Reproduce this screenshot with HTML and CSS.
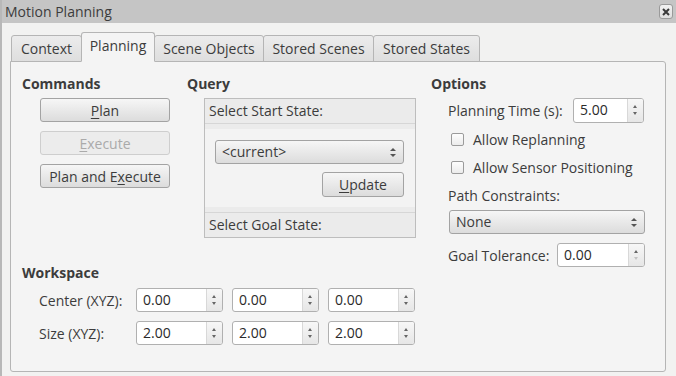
FILE: index.html
```html
<!DOCTYPE html>
<html lang="en">
<head>
    <meta charset="UTF-8">
    <meta name="viewport" content="width=device-width, initial-scale=1.0">
    <title>Motion Planning</title>
    <link rel="stylesheet" href="styles.css">
</head>
<body>
    <div class="window">
        <div class="titlebar">
            <span class="title">Motion Planning</span>
            <span class="close-btn">
                <svg width="8" height="8" viewBox="0 0 8 8"><path d="M1 1 L7 7 M7 1 L1 7" stroke="#3a3a3a" stroke-width="2"/></svg>
            </span>
        </div>

        <div class="content">
            <div class="tabs">
                <div class="tab tab-context">Context</div>
                <div class="tab tab-planning active">Planning</div>
                <div class="tab tab-objects">Scene Objects</div>
                <div class="tab tab-scenes">Stored Scenes</div>
                <div class="tab tab-states">Stored States</div>
            </div>

            <div class="pane">
                <!-- Commands -->
                <div class="commands">
                    <h2 class="group-title">Commands</h2>
                    <button class="btn cmd-btn"><u>P</u>lan</button>
                    <button class="btn cmd-btn" disabled><u>E</u>xecute</button>
                    <button class="btn cmd-btn">Plan and E<u>x</u>ecute</button>
                </div>

                <!-- Query -->
                <div class="query">
                    <h2 class="group-title">Query</h2>
                    <div class="toolbox">
                        <div class="toolbox-head">Select Start State:</div>
                        <div class="toolbox-page">
                            <div class="combo">&lt;current&gt;</div>
                            <div class="update-row">
                                <button class="btn update-btn"><u>U</u>pdate</button>
                            </div>
                        </div>
                        <div class="toolbox-head last">Select Goal State:</div>
                    </div>
                </div>

                <!-- Options -->
                <div class="options">
                    <h2 class="group-title">Options</h2>
                    <div class="opt-row time-row">
                        <span class="label">Planning Time (s):</span>
                        <div class="spin spin-time"><span class="spin-text">5.00</span><span class="spin-arrows"></span></div>
                    </div>
                    <label class="check-row first"><span class="checkbox"></span>Allow Replanning</label>
                    <label class="check-row"><span class="checkbox"></span>Allow Sensor Positioning</label>
                    <div class="opt-row label-row"><span class="label">Path Constraints:</span></div>
                    <div class="combo combo-wide">None</div>
                    <div class="opt-row goal-row">
                        <span class="label">Goal Tolerance:</span>
                        <div class="spin spin-goal"><span class="spin-text">0.00</span><span class="spin-arrows at-min"></span></div>
                    </div>
                </div>

                <!-- Workspace -->
                <div class="workspace">
                    <h2 class="group-title">Workspace</h2>
                    <div class="ws-row first">
                        <span class="ws-label">Center (XYZ):</span>
                        <div class="spin"><span class="spin-text">0.00</span><span class="spin-arrows"></span></div>
                        <div class="spin"><span class="spin-text">0.00</span><span class="spin-arrows"></span></div>
                        <div class="spin"><span class="spin-text">0.00</span><span class="spin-arrows"></span></div>
                    </div>
                    <div class="ws-row">
                        <span class="ws-label">Size (XYZ):</span>
                        <div class="spin"><span class="spin-text">2.00</span><span class="spin-arrows"></span></div>
                        <div class="spin"><span class="spin-text">2.00</span><span class="spin-arrows"></span></div>
                        <div class="spin"><span class="spin-text">2.00</span><span class="spin-arrows"></span></div>
                    </div>
                </div>
            </div>
        </div>
    </div>
</body>
</html>
```

FILE: styles.css
```css
body {
    margin: 0;
    padding: 0;
    font-family: 'Open Sans', 'DejaVu Sans', sans-serif;
    font-size: 14px;
    color: #3c3c3c;
    background: #f2f2f1;
}

.window {
    width: 676px;
    height: 376px;
    box-sizing: border-box;
    border-left: 2px solid #b8b8b8;
    overflow: hidden;
}

/* Title bar */
.titlebar {
    height: 23px;
    background: #c5c5c5;
    display: flex;
    align-items: center;
    justify-content: space-between;
    padding: 0 3px 0 3px;
}

.title {
    font-size: 14px;
}

.close-btn {
    width: 12px;
    height: 13px;
    border: 1px solid #9a9a9a;
    border-radius: 3px;
    background: linear-gradient(#f2f2f2, #dedede);
    display: flex;
    align-items: center;
    justify-content: center;
}

/* Tabs */
.content {
    padding: 9px 0 0 8px;
}

.tabs {
    display: flex;
    align-items: flex-end;
    padding-left: 1px;
    margin-bottom: -1px;
    position: relative;
    z-index: 1;
}

.tab {
    height: 27px;
    box-sizing: border-box;
    border: 1px solid #b5b5b5;
    border-radius: 3px 3px 0 0;
    background: linear-gradient(#ececec, #dedede);
    display: flex;
    align-items: center;
    justify-content: center;
    margin-right: -1px;
}

.tab.active {
    height: 30px;
    background: #f4f4f4;
    border-bottom-color: #f4f4f4;
    padding-bottom: 3px;
    position: relative;
}

.tab-context { width: 71px; }
.tab-planning { width: 74px; }
.tab-objects { width: 110px; }
.tab-scenes { width: 111px; }
.tab-states { width: 107px; }

.pane {
    width: 656px;
    height: 311px;
    box-sizing: border-box;
    border: 1px solid #b5b5b5;
    border-radius: 0 3px 3px 3px;
    background: #f4f4f4;
    display: grid;
    grid-template-columns: 165px 244px 1fr;
    grid-template-rows: auto 1fr;
    padding: 13px 0 0 11px;
}

.group-title {
    font-size: 14px;
    font-weight: bold;
    margin: 0;
    height: 18px;
    line-height: 18px;
}

/* Buttons */
.btn {
    font-family: inherit;
    font-size: 14px;
    color: #3c3c3c;
    border: 1px solid #a3a3a3;
    border-radius: 3px;
    background: linear-gradient(#f6f6f6, #dcdcdc);
    padding: 0;
    box-sizing: border-box;
}

.btn u {
    text-underline-offset: 2px;
}

.btn:disabled {
    color: #aaaaaa;
    border-color: #cecece;
    background: #ececec;
}

.commands {
    grid-column: 1;
    grid-row: 1;
    display: flex;
    flex-direction: column;
    align-items: flex-start;
    gap: 9px;
}

.commands .group-title {
    margin-bottom: -4px;
}

.cmd-btn {
    width: 130px;
    height: 24px;
    margin-left: 18px;
}

/* Query tool box */
.query {
    grid-column: 2;
    grid-row: 1;
}

.toolbox {
    width: 212px;
    box-sizing: border-box;
    margin: 5px 0 0 17px;
    border: 1px solid #bdbdbd;
    background: #ebebeb;
}

.toolbox-head {
    height: 24px;
    line-height: 24px;
    padding-left: 4px;
    border-bottom: 1px solid #d6d6d6;
}

.toolbox-head.last {
    border-bottom: none;
    border-top: 1px solid #d6d6d6;
}

.toolbox-page {
    margin: 5px 0;
    background: #f3f3f3;
    padding: 11px 11px 10px 10px;
}

.combo {
    height: 24px;
    box-sizing: border-box;
    border: 1px solid #a3a3a3;
    border-radius: 3px;
    background: linear-gradient(#f6f6f6, #dcdcdc);
    padding-left: 6px;
    line-height: 22px;
    position: relative;
}

.combo::before,
.combo::after {
    content: "";
    position: absolute;
    right: 7px;
    border-left: 3px solid transparent;
    border-right: 3px solid transparent;
}

.combo::before {
    top: 7px;
    border-bottom: 3px solid #555;
}

.combo::after {
    top: 13px;
    border-top: 3px solid #555;
}

.update-row {
    display: flex;
    justify-content: flex-end;
    margin-top: 8px;
}

.update-btn {
    width: 82px;
    height: 25px;
}

/* Options */
.options {
    grid-column: 3;
    grid-row: 1 / span 2;
    display: flex;
    flex-direction: column;
}

.opt-row {
    display: flex;
    align-items: center;
    padding-left: 17px;
}

.time-row {
    margin-top: 5px;
    height: 25px;
}

.time-row .label {
    width: 125px;
}

.check-row {
    display: flex;
    align-items: center;
    height: 28px;
    padding-left: 20px;
}

.check-row.first {
    margin-top: 2px;
}

.checkbox {
    width: 11px;
    height: 11px;
    border: 1px solid #9b9b9b;
    border-radius: 2px;
    background: linear-gradient(#fdfdfd, #ececec);
    margin-right: 9px;
}

.label-row {
    height: 28px;
}

.combo-wide {
    width: 196px;
    margin: 1px 0 0 18px;
}

.goal-row {
    margin-top: 9px;
    height: 24px;
}

.goal-row .label {
    width: 109px;
}

/* Spin boxes */
.spin {
    width: 87px;
    height: 24px;
    box-sizing: border-box;
    border: 1px solid #b0b0b0;
    border-radius: 3px;
    background: #ffffff;
    display: flex;
    overflow: hidden;
}

.spin-time {
    width: 71px;
    height: 25px;
}

.spin-goal {
    width: 88px;
}

.spin-text {
    flex: 1;
    padding-left: 6px;
    line-height: 22px;
    color: #2a2a2a;
}

.spin-arrows {
    width: 15px;
    border-left: 1px solid #d8d8d8;
    background: linear-gradient(#f7f7f7, #e6e6e6);
    position: relative;
}

.spin-arrows::before,
.spin-arrows::after {
    content: "";
    position: absolute;
    left: 5px;
    border-left: 2.5px solid transparent;
    border-right: 2.5px solid transparent;
}

.spin-arrows::before {
    top: 6px;
    border-bottom: 3px solid #666;
}

.spin-arrows::after {
    top: 13px;
    border-top: 3px solid #666;
}

.spin-arrows.at-min::after {
    border-top-color: #c2c2c2;
}

/* Workspace */
.workspace {
    grid-column: 1 / span 2;
    grid-row: 2;
    margin-top: 26px;
}

.ws-row {
    display: flex;
    align-items: center;
    gap: 9px;
    padding-left: 17px;
    margin-top: 9px;
}

.ws-row.first {
    margin-top: 6px;
}

.ws-label {
    width: 88px;
}
```
